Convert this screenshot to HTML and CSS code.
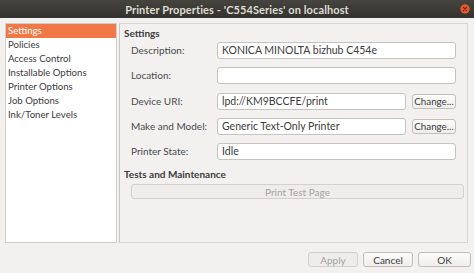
FILE: index.html
```html
<!DOCTYPE html>
<html>
<head>
<meta charset="utf-8">
<link rel="stylesheet" href="styles.css">
</head>
<body>
<div class="window">
  <div class="titlebar">
    <span class="title">Printer Properties - 'C554Series' on localhost</span>
    <span class="close"><svg width="10" height="10" viewBox="0 0 10 10"><circle cx="5" cy="5" r="4.7" fill="#e9582c"/><path d="M3.4 3.4 L6.6 6.6 M6.6 3.4 L3.4 6.6" stroke="#5a2410" stroke-width="1.1" stroke-linecap="round"/></svg></span>
  </div>
  <div class="content">
    <ul class="sidebar">
      <li class="selected">Settings</li>
      <li>Policies</li>
      <li>Access Control</li>
      <li>Installable Options</li>
      <li>Printer Options</li>
      <li>Job Options</li>
      <li>Ink/Toner Levels</li>
    </ul>
    <div class="panel">
      <div class="heading">Settings</div>
      <div class="form">
        <span class="label">Description:</span>
        <span class="entry span2">KONICA MINOLTA bizhub C454e</span>
        <span class="label">Location:</span>
        <span class="entry span2"></span>
        <span class="label">Device URI:</span>
        <span class="entry">lpd://KM9BCCFE/print</span>
        <span class="btn small">Change...</span>
        <span class="label">Make and Model:</span>
        <span class="entry">Generic Text-Only Printer</span>
        <span class="btn small">Change...</span>
        <span class="label">Printer State:</span>
        <span class="entry span2">Idle</span>
      </div>
      <div class="heading second">Tests and Maintenance</div>
      <div class="btn test disabled">Print Test Page</div>
    </div>
  </div>
  <div class="actions">
    <span class="btn action disabled">Apply</span>
    <span class="btn action">Cancel</span>
    <span class="btn action ok">OK</span>
  </div>
</div>
</body>
</html>
```
FILE: styles.css
```css
* { box-sizing: border-box; }
html, body { margin: 0; padding: 0; }
body {
  width: 474px;
  height: 273px;
  overflow: hidden;
  background: #f2f1f0;
  font-family: "Lato", "Open Sans", sans-serif;
  font-size: 10px;
  color: #3c3c3c;
}
.window {
  display: flex;
  flex-direction: column;
  height: 273px;
}
.titlebar {
  position: relative;
  height: 18px;
  flex: none;
  background: linear-gradient(#45443f, #33322e);
  display: flex;
  align-items: center;
  justify-content: center;
}
.title {
  color: #dfdbd2;
  font-weight: bold;
  font-size: 11px;
  letter-spacing: 0.1px;
}
.close {
  position: absolute;
  right: 4px;
  top: 4px;
  width: 10px;
  height: 10px;
  display: flex;
}
.content {
  display: flex;
  gap: 2px;
  padding: 5px 6px 0 5px;
  height: 225px;
  flex: none;
}
.sidebar {
  margin: 0;
  padding: 0;
  list-style: none;
  width: 112px;
  flex: none;
  background: #fff;
  border: 1px solid #cfcdca;
  font-size: 9.6px;
}
.sidebar li {
  height: 14px;
  line-height: 14px;
  padding-left: 2px;
}
.sidebar li.selected {
  background: #f07746;
  color: #fff;
}
.panel {
  flex: 1;
  border: 1px solid #d8d6d3;
  border-left-color: #c8c6c3;
  padding: 2px 3px 0 4px;
  display: flex;
  flex-direction: column;
}
.heading {
  font-weight: bold;
  line-height: 14px;
  height: 14px;
}
.heading.second { margin-top: 7px; }
.form {
  margin-top: 2px;
  margin-left: 7px;
  margin-right: 8px;
  display: grid;
  grid-template-columns: 80px 1fr 44px;
  grid-auto-rows: 17px;
  row-gap: 8.25px;
  column-gap: 6px;
  align-items: center;
}
.label { line-height: 17px; color: #4a4a4a; white-space: nowrap; }
.entry {
  height: 17px;
  background: #fff;
  border: 1px solid #c5c3bf;
  border-radius: 3px;
  line-height: 15px;
  padding-left: 4px;
  white-space: nowrap;
  overflow: hidden;
  font-size: 10.5px;
}
.span2 { grid-column: 2 / 4; }
.btn {
  display: flex;
  align-items: center;
  justify-content: center;
  background: linear-gradient(#fbfbfa, #efeeed);
  border: 1px solid #c2bfbb;
  border-radius: 3px;
  color: #3c3c3c;
}
.btn.small { height: 15px; font-size: 9.8px; }
.btn.disabled {
  color: #a5a39f;
  background: #eeedec;
  border-color: #d3d1ce;
}
.test {
  margin: 3px 0 0 7px;
  height: 15px;
}
.actions {
  display: flex;
  justify-content: flex-end;
  gap: 5px;
  padding: 9px 3px 0 0;
}
.btn.action { width: 50px; height: 15px; }
.btn.ok { width: 53px; }
```
